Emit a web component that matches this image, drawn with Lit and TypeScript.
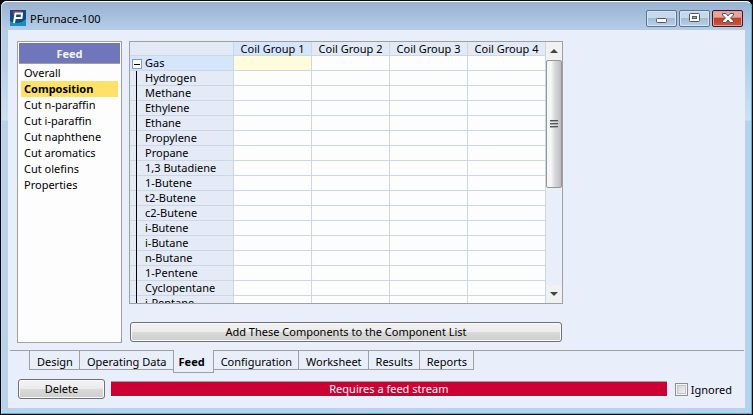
import { LitElement, html, css } from "lit";
import { customElement, state } from "lit/decorators.js";

const SECTIONS = ["Overall", "Composition", "Cut n-paraffin", "Cut i-paraffin", "Cut naphthene", "Cut aromatics", "Cut olefins", "Properties"];
const COMPONENTS = ["Hydrogen", "Methane", "Ethylene", "Ethane", "Propylene", "Propane", "1,3 Butadiene", "1-Butene", "t2-Butene", "c2-Butene", "i-Butene", "i-Butane", "n-Butane", "1-Pentene", "Cyclopentane", "i-Pentane"];
const COILS = ["Coil Group 1", "Coil Group 2", "Coil Group 3", "Coil Group 4"];
const TABS = ["Design", "Operating Data", "Feed", "Configuration", "Worksheet", "Results", "Reports"];

@customElement("app-root")
export class AppRoot extends LitElement {
  @state() private section = "Composition";
  @state() private tab = "Feed";

  static styles = css`
    :host { display: block; min-height: 100vh; background: #05060a; font: 11px/15px "Noto Sans", "Open Sans", sans-serif; color: #000; }
    * { box-sizing: border-box; }
    button { font: inherit; color: inherit; margin: 0; padding: 0; border: 0; background: none; }
    .window { min-height: 100vh; display: flex; flex-direction: column; border: 1px solid #05060a; border-radius: 7px 7px 0 0; background: #b9d1ea; }
    .frame { flex: 1; display: flex; flex-direction: column; padding: 0 6px 5px; border: 1px solid #35bfd6; border-top-color: #fff; border-left-color: #c7dbef; border-radius: 6px 6px 0 0; background: linear-gradient(#98b2d1 0, #b4cce6 27px, #b6cee8 60px, #cfe0f2 118px, #b9d1ea 119px); }
    .title { display: flex; align-items: center; height: 28px; padding: 4px 2px 0 2px; gap: 4px; }
    .title h1 { flex: 1; margin: 0; font: inherit; }
    .controls { display: flex; gap: 2px; }
    .ctl { width: 31px; height: 17px; border: 1px solid #5c7391; border-radius: 2px; background: linear-gradient(#c6d8ec 0 45%, #a2bbd7 50%, #b9d1ea); box-shadow: inset 0 0 0 1px #d5e3f2; display: flex; align-items: center; justify-content: center; }
    .ctl.min { padding-top: 4px; }
    .ctl.close { border-color: #4b1422; background: linear-gradient(#e5a59b 0 40%, #c0412b 50%, #c8573d); box-shadow: inset 0 0 0 1px #dfa097; }
    svg { display: block; }
    .client { flex: 1; display: flex; flex-direction: column; background: #e8effa; }
    .main { flex: 1 1 0; min-height: 0; display: grid; grid-template-columns: 105px minmax(0, 434px); gap: 7px; padding: 11px 9px 7px; }
    .side { border: 1px solid #a0a0a0; background: #fdfdfd; padding: 1px; }
    .side h2 { margin: 0 0 1px; height: 21px; padding-top: 1px; font: bold 11px/20px "Noto Sans", sans-serif; color: #f2f4ff; text-align: center; background: #7076bb; border-bottom: 1px solid #a0a0a0; }
    .side ul { list-style: none; margin: 0; padding: 0 2px; }
    .side button { display: block; width: 100%; height: 16px; padding-left: 3px; text-align: left; line-height: 16px; }
    .side button.on { background: #ffe168; font-weight: bold; }
    .work { display: flex; flex-direction: column; gap: 18px; min-height: 0; padding-bottom: 1px; }
    .grid { flex: 1 1 0; min-height: 0; display: flex; border: 1px solid #a0a0a0; overflow: hidden; }
    .scroll { flex: 1; overflow: hidden; min-width: 0; }
    table { width: 100%; border-collapse: separate; border-spacing: 0; table-layout: fixed; }
    .names { width: 104px; }
    th, td { height: 15px; padding: 0; line-height: 14px; font-weight: normal; border-right: 1px solid #ccd6e4; border-bottom: 1px solid #ccd6e4; white-space: nowrap; }
    td { background: #fdfdfd; }
    thead th { height: 14px; line-height: 13px; background: #e2eaf6; text-align: center; }
    thead th.hot { background: #d5e5fb; }
    tbody th { background: #e4ebf7; }
    .name { display: flex; align-items: stretch; height: 14px; }
    .tree { width: 15px; display: flex; justify-content: center; padding-right: 2px; }
    .line { width: 1px; height: 15px; background: #000; }
    tr.group th { background: #d5e5fb; }
    tr.group .tree { align-items: flex-end; }
    td.active { background: #fffcdc; }
    .bar { width: 16px; display: flex; flex-direction: column; background: #e8effa; }
    .arrow { height: 18px; background: #f1f1f1; display: flex; align-items: center; justify-content: center; }
    .thumb { height: 128px; border: 1px solid #969696; border-radius: 2px; background: linear-gradient(90deg, #f6f6f6 0 30%, #d9d9dc 55%, #bebec2); display: flex; align-items: center; justify-content: center; }
    .space { flex: 1; }
    .push { height: 20px; border: 1px solid #707070; border-radius: 3px; background: linear-gradient(#f3f3f3 0, #ebebeb 50%, #dadada 50%, #cdcdcd); box-shadow: inset 0 0 0 1px #fafafa; margin: 0 1px; line-height: 16px; }
    .tabs { display: flex; align-items: flex-start; height: 22px; margin: 0 1px 0 2px; padding-left: 19px; border-top: 1px solid #a0a0a0; }
    .tabs button { height: 19px; padding: 3px 6px 0 7px; border: solid #a0a0a0; border-width: 0 1px 1px 0; line-height: 15px; }
    .tabs button:first-child { border-left-width: 1px; }
    .tabs button.on { height: 23px; margin-top: -1px; padding: 4px 8px 3px 5px; font-weight: bold; background: #e8effa; border-left-width: 1px; margin-left: -1px; }
    .foot { display: flex; align-items: center; gap: 6px; padding: 7px 13px 9px 9px; }
    .foot .push { width: 87px; margin-right: 0; }
    .status { flex: 1; height: 16px; line-height: 14px; color: #fff; text-align: center; background: #cc0033; border-top: 1px solid #a0a0a0; border-bottom: 1px solid #fff; }
    label { display: flex; align-items: center; gap: 3px; padding-left: 2px; }
    input { appearance: none; margin: 0; width: 13px; height: 13px; border: 1px solid #8e8f8f; background: linear-gradient(135deg, #cbcfd5, #f6f6f6); box-shadow: inset 0 0 0 1px #f4f4f4, inset 0 0 0 2px #c3c7cd; }
    input:checked { background: #4a6a9c; }
  `;

  private row(name: string) {
    return html`<tr><th scope="row"><div class="name"><span class="tree"><span class="line"></span></span>${name}</div></th>${COILS.map(() => html`<td></td>`)}</tr>`;
  }

  render() {
    return html`
      <div class="window"><div class="frame">
        <header class="title">
          <svg width="16" height="16" viewBox="0 0 16 16"><rect width="16" height="16" fill="#124a80"/><path d="M0 11Q8 16 16 9V16H0Z" fill="#1690bd"/><path d="M4 13 5.500 3.500H12L11.500 8H5" fill="none" stroke="#fff" stroke-width="2"/><path d="M3.500 5V1.500H12" fill="none" stroke="#e02832"/></svg>
          <h1>PFurnace-100</h1>
          <div class="controls">
            <button class="ctl min" aria-label="Minimize"><svg width="12" height="6"><rect x=".5" y="1.5" width="10" height="4" rx="1" fill="#fff" stroke="#535666"/></svg></button>
            <button class="ctl" aria-label="Maximize"><svg width="12" height="10"><rect x=".5" y=".5" width="10" height="8" rx="1" fill="#fff" stroke="#535666"/><rect x="3.5" y="3.5" width="4" height="2" fill="#91abc8" stroke="#535666"/></svg></button>
            <button class="ctl close" aria-label="Close"><svg width="12" height="10"><path d="M.5.5H4L6 3 8 .5H11.500V2L8.500 5 11.500 8V9.500H8L6 7 4 9.500H.5V8L3.500 5 .5 2Z" fill="#fff" stroke="#535666"/></svg></button>
          </div>
        </header>
        <div class="client">
          <main class="main">
            <nav class="side"><h2>Feed</h2><ul>${SECTIONS.map(s => html`<li><button class=${s === this.section ? "on" : ""} @click=${() => (this.section = s)}>${s}</button></li>`)}</ul></nav>
            <section class="work">
              <div class="grid">
                <div class="scroll"><table>
                  <colgroup><col class="names"><col><col><col><col></colgroup>
                  <thead><tr><th></th>${COILS.map((c, i) => html`<th scope="col" class=${i === 0 ? "hot" : ""}>${c}</th>`)}</tr></thead>
                  <tbody>
                    <tr class="group"><th scope="row"><div class="name"><button class="tree" aria-label="Collapse Gas"><svg width="10" height="13" viewBox="0 0 10 13"><rect x=".5" y="2.5" width="9" height="9" fill="#fff" stroke="#7b9ccb"/><path d="M2 7.5H8" stroke="#000"/></svg></button>Gas</div></th><td class="active"></td><td></td><td></td><td></td></tr>
                    ${COMPONENTS.map(c => this.row(c))}
                  </tbody>
                </table></div>
                <div class="bar">
                  <button class="arrow" aria-label="Scroll up"><svg width="8" height="4"><path d="M0 4 4 0 8 4Z" fill="#444"/></svg></button>
                  <div class="thumb"><svg width="8" height="8"><path d="M0 .5H8M0 3.5H8M0 6.5H8" stroke="#555"/><path d="M0 1.5H8M0 4.5H8M0 7.5H8" stroke="#aaa"/></svg></div>
                  <div class="space"></div>
                  <button class="arrow" aria-label="Scroll down"><svg width="8" height="4"><path d="M0 0 4 4 8 0Z" fill="#444"/></svg></button>
                </div>
              </div>
              <button class="push">Add These Components to the Component List</button>
            </section>
          </main>
          <nav class="tabs">${TABS.map(t => html`<button class=${t === this.tab ? "on" : ""} @click=${() => (this.tab = t)}>${t}</button>`)}</nav>
          <footer class="foot"><button class="push">Delete</button><div class="status" role="status">Requires a feed stream</div><label><input type="checkbox">Ignored</label></footer>
        </div>
      </div></div>`;
  }
}
